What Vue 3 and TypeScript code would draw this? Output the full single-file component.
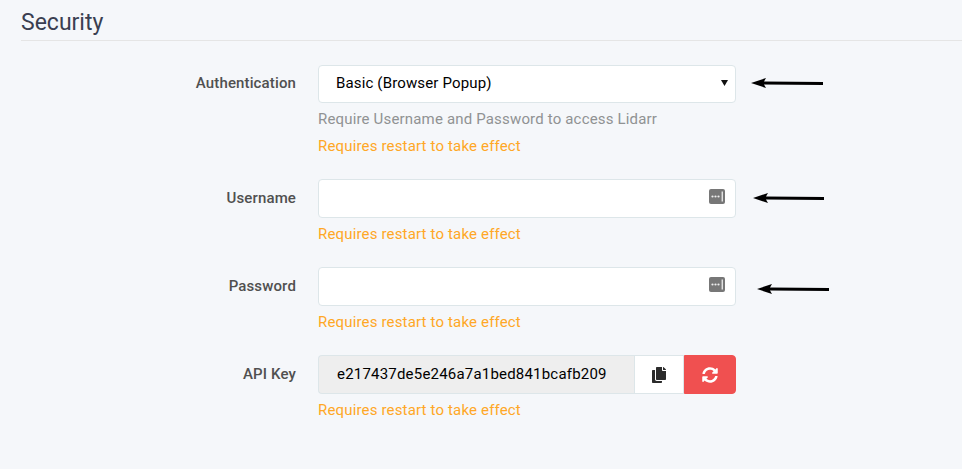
<template>
  <div class="page">
    <h2 class="legend">Security</h2>

    <div class="form">
      <div v-for="row in rows" :key="row.label" class="row" :class="'row-' + row.kind">
        <label class="label">{{ row.label }}</label>
        <div class="field">
          <div v-if="row.kind === 'select'" class="control select">
            <span>Basic (Browser Popup)</span>
            <svg class="caret" width="7" height="6" viewBox="0 0 7 6"><path d="M0 0h7L3.5 6z" fill="#111" /></svg>
          </div>

          <div v-else-if="row.kind === 'input'" class="control">
            <svg class="pw-icon" width="16" height="15" viewBox="0 0 16 15">
              <rect width="16" height="15" rx="2" fill="#777" />
              <circle cx="3.5" cy="7.5" r="1.1" fill="#eee" />
              <circle cx="6.5" cy="7.5" r="1.1" fill="#eee" />
              <circle cx="9.5" cy="7.5" r="1.1" fill="#eee" />
              <rect x="12.6" y="2.5" width="1.3" height="10" fill="#eee" />
            </svg>
          </div>

          <div v-else class="key-group">
            <div class="key">e217437de5e246a7a1bed841bcafb209</div>
            <button class="btn copy" type="button">
              <svg width="14" height="16" viewBox="0 0 448 512">
                <path fill="#2b2b2b" d="M320 448v40c0 13.255-10.745 24-24 24H24c-13.255 0-24-10.745-24-24V120c0-13.255 10.745-24 24-24h72v296c0 30.879 25.121 56 56 56h168zm0-344V0H152c-13.255 0-24 10.745-24 24v368c0 13.255 10.745 24 24 24h272c13.255 0 24-10.745 24-24V128H344c-13.2 0-24-10.8-24-24zm120.971-31.029L375.029 7.029A24 24 0 0 0 358.059 0H352v96h96v-6.059a24 24 0 0 0-7.029-16.97z" />
              </svg>
            </button>
            <button class="btn regen" type="button">
              <svg width="16" height="16" viewBox="0 0 512 512">
                <path fill="#fff" d="M370.72 133.28C339.458 104.008 298.888 87.962 255.848 88c-77.458.068-144.328 53.178-162.791 126.85-1.344 5.363-6.122 9.15-11.651 9.15H24.103c-7.498 0-13.194-6.807-11.807-14.176C33.933 94.924 134.813 8 256 8c66.448 0 126.791 26.136 171.315 68.685L463.03 40.97C478.149 25.851 504 36.559 504 57.941V192c0 13.255-10.745 24-24 24H345.941c-21.382 0-32.09-25.851-16.971-40.971l41.75-41.749zM32 296h134.059c21.382 0 32.09 25.851 16.971 40.971l-41.75 41.75c31.262 29.273 71.835 45.319 114.876 45.28 77.418-.07 144.315-53.144 162.787-126.849 1.344-5.363 6.122-9.15 11.651-9.15h57.304c7.498 0 13.194 6.807 11.807 14.176C478.067 417.076 377.187 504 256 504c-66.448 0-126.791-26.136-171.315-68.685L48.97 471.03C33.851 486.149 8 475.441 8 454.059V320c0-13.255 10.745-24 24-24z" />
              </svg>
            </button>
          </div>

          <div v-if="row.help" class="help">{{ row.help }}</div>
          <div class="warn">Requires restart to take effect</div>
        </div>
      </div>
    </div>

    <svg v-for="a in arrows" :key="a.y" class="arrow" :style="{ left: a.x + 'px', top: a.y + 'px' }" :width="a.w" height="12" :viewBox="`0 0 ${a.w} 12`">
      <path :d="`M0 6 L15 1 L13 4.6 L${a.w} 5 V8 L13 7.6 L15 11 Z`" fill="#000" />
    </svg>
  </div>
</template>

<script setup lang="ts">
const rows = [
  { label: 'Authentication', kind: 'select', help: 'Require Username and Password to access Lidarr' },
  { label: 'Username', kind: 'input', help: '' },
  { label: 'Password', kind: 'input', help: '' },
  { label: 'API Key', kind: 'key', help: '' },
]

// hand drawn arrows on top of the screenshot
const arrows = [
  { x: 751, y: 77, w: 72 },
  { x: 753, y: 192, w: 71 },
  { x: 757, y: 283, w: 72 },
]
</script>

<style>
body {
  background: #f5f7fa;
}
</style>

<style scoped>
.page {
  position: relative;
  height: 469px;
  overflow: hidden;
  padding: 9px 0 0 21px;
  box-sizing: border-box;
  font-family: Roboto, "Liberation Sans", sans-serif;
  font-size: 15px;
  color: #3a3f51;
}

.legend {
  margin: 0;
  height: 31px;
  line-height: 27px;
  font-size: 23px;
  font-weight: 400;
  border-bottom: 1px solid #e5e5e5;
}

.form {
  padding-top: 24px;
}

.row {
  display: grid;
  grid-template-columns: 275px 418px;
  column-gap: 22px;
  margin-bottom: 23px;
}

.label {
  text-align: right;
  font-weight: 500;
  font-size: 15px;
  letter-spacing: 0.13px;
  line-height: 38px;
  color: #505050;
}

.row-select .label {
  line-height: 36px;
}

.control {
  position: relative;
  height: 39px;
  box-sizing: border-box;
  background: #fff;
  border: 1px solid #dde6e9;
  border-radius: 4px;
}

.select {
  height: 38px;
  padding: 0 17px;
  line-height: 34px;
  color: #000;
  letter-spacing: 0.15px;
}

.caret {
  position: absolute;
  right: 7px;
  top: 14px;
}

.pw-icon {
  position: absolute;
  right: 10px;
  top: 9px;
}

.help {
  margin-top: 6px;
  line-height: 20px;
  color: #909293;
  letter-spacing: 0.17px;
}

.warn {
  margin-top: 6px;
  line-height: 20px;
  color: #ffa726;
  letter-spacing: 0.16px;
}

.help + .warn {
  margin-top: 7px;
}

.key-group {
  display: flex;
  height: 39px;
}

.key {
  flex: 1;
  box-sizing: border-box;
  padding-left: 18px;
  line-height: 37px;
  background: #eee;
  border: 1px solid #dde6e9;
  border-right: 0;
  border-radius: 4px 0 0 4px;
  color: #000;
  letter-spacing: 0.2px;
}

.btn {
  display: flex;
  align-items: center;
  justify-content: center;
  padding: 0;
  box-sizing: border-box;
  border: 1px solid #dde6e9;
}

.copy {
  width: 50px;
  background: #fff;
}

.regen {
  width: 52px;
  background: #f05050;
  border-color: #f05050;
  border-radius: 0 4px 4px 0;
}

.arrow {
  position: absolute;
}
</style>
